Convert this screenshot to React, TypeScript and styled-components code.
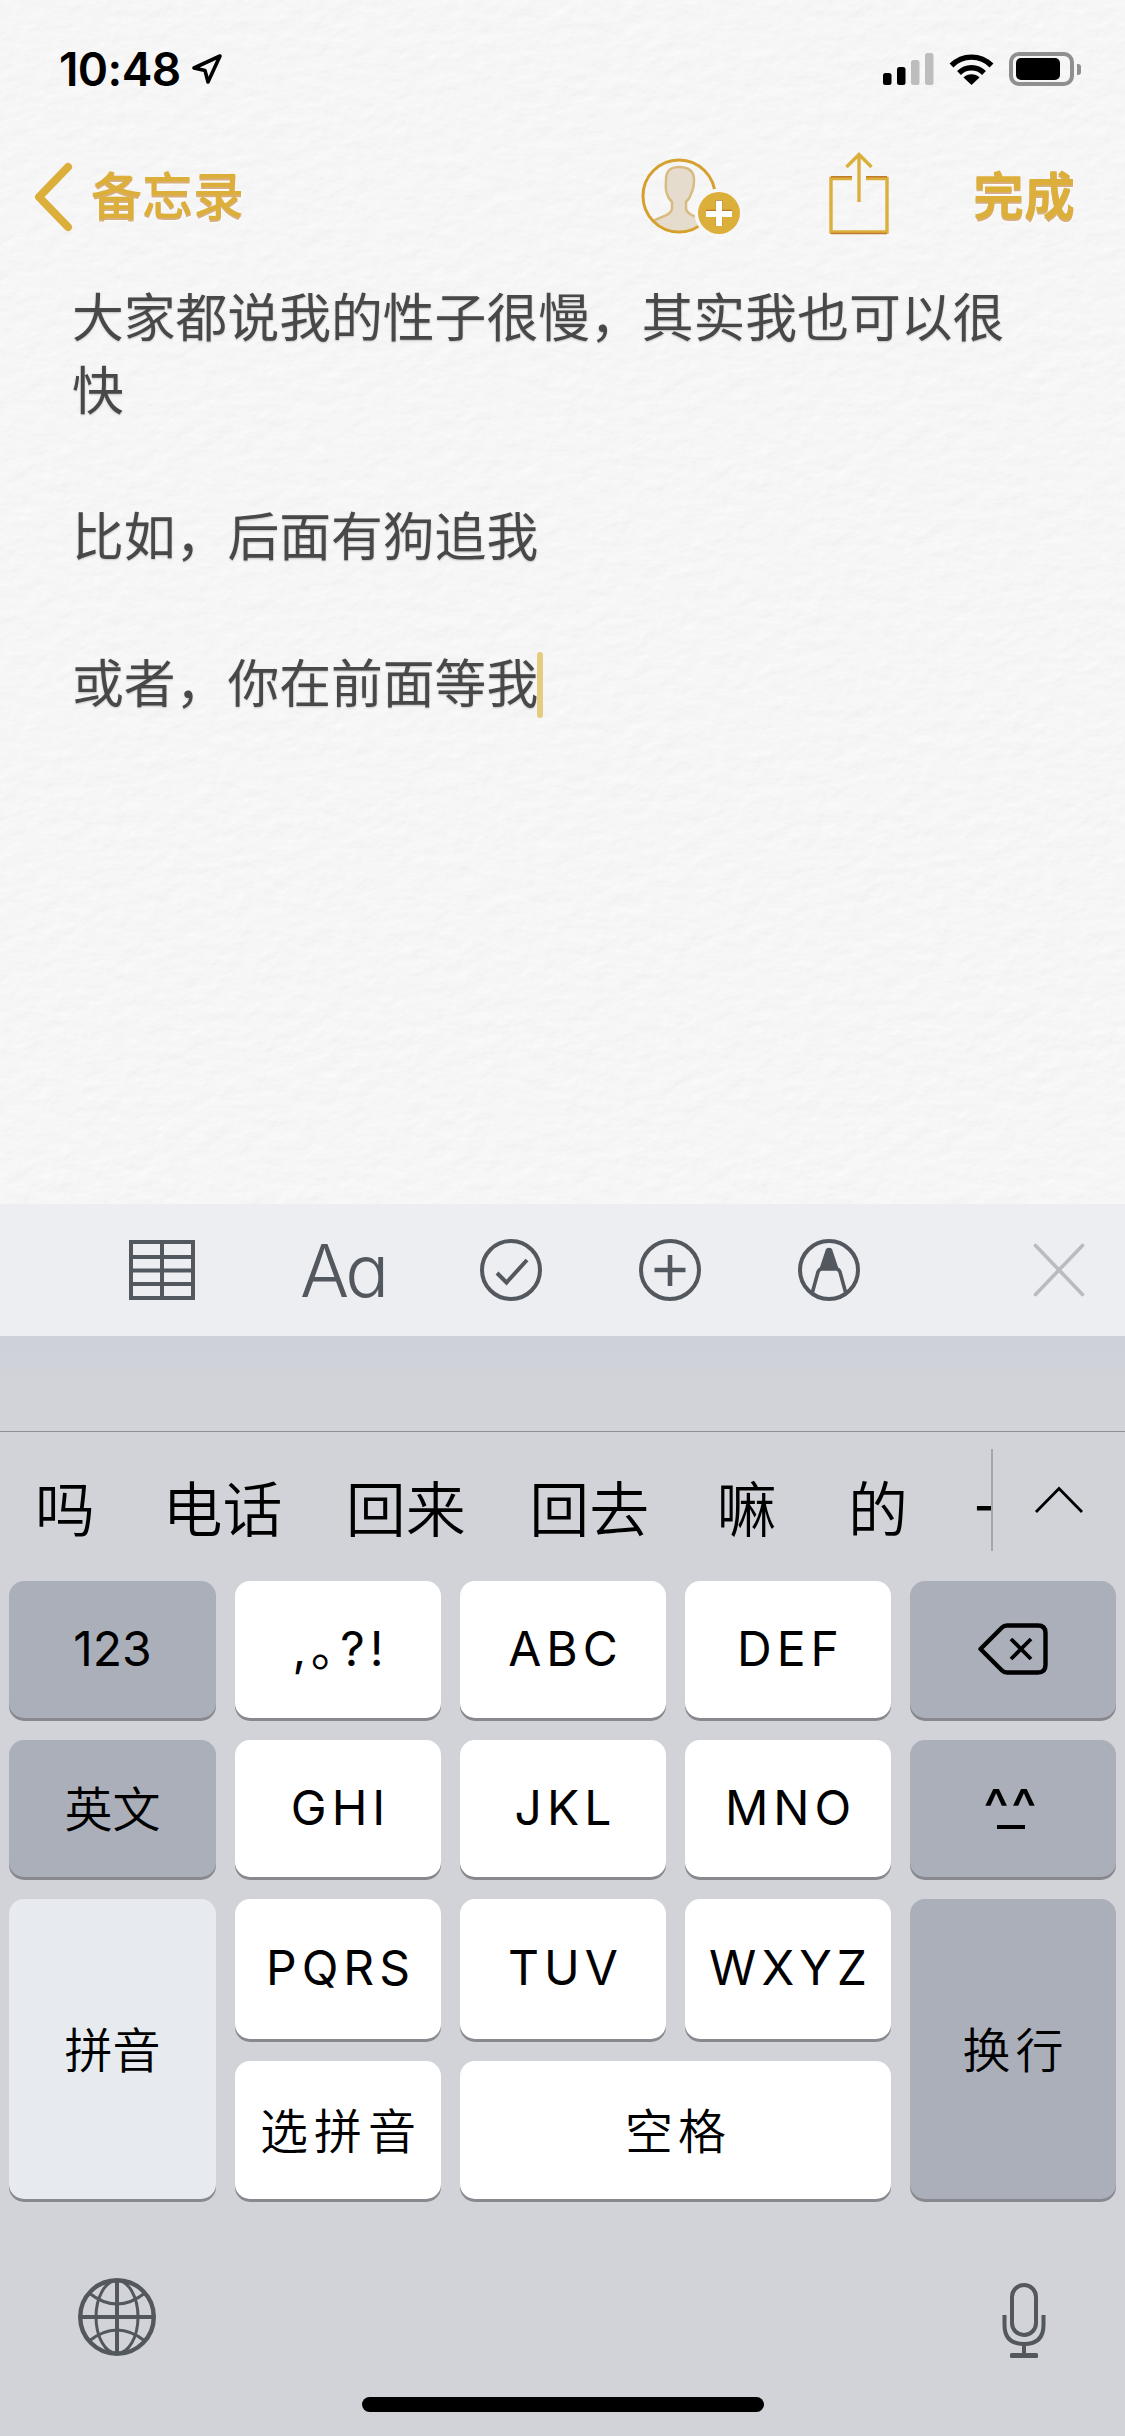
import React from "react";
import styled, { createGlobalStyle } from "styled-components";

const CJK = `"Noto Sans CJK SC", "Noto Sans", sans-serif`;
const LATIN = `Inter, "Noto Sans CJK SC", sans-serif`;
const GOLD = "#dcae3a";
const ICON = "#53575e";

const paper =
  "data:image/svg+xml," +
  encodeURIComponent(
    `<svg xmlns='http://www.w3.org/2000/svg' width='700' height='700'><filter id='p' x='0' y='0' width='100%' height='100%'><feTurbulence type='fractalNoise' baseFrequency='0.05 0.075' numOctaves='4' seed='7' stitchTiles='stitch'/><feDiffuseLighting surfaceScale='0.34' diffuseConstant='1.12' lighting-color='#f9f9f9'><feDistantLight azimuth='60' elevation='60'/></feDiffuseLighting></filter><rect width='700' height='700' filter='url(#p)'/></svg>`
  );

const Global = createGlobalStyle`
  html, body { margin: 0; padding: 0; background: #f6f6f6; }
  * { box-sizing: border-box; }
`;

const Screen = styled.div`
  width: 1125px;
  height: 2436px;
  display: flex;
  flex-direction: column;
  overflow: hidden;
  background: #f7f7f7 url("${paper}");
`;

const StatusBar = styled.div`
  height: 138px;
  flex: none;
  display: flex;
  align-items: center;
  padding: 0 43px 0 59px;
`;

const Clock = styled.span`
  font: 600 46px/1 ${LATIN};
  color: #000;
  letter-spacing: -0.6px;
`;

const LocationArrow = styled.svg`
  width: 32px;
  height: 32px;
  margin-left: 10px;
`;

const StatusIcons = styled.div`
  margin-left: auto;
  display: flex;
  align-items: center;
  gap: 15px;
`;

const Battery = styled.div`
  width: 65px;
  height: 34px;
  border: 4px solid #8f8f8f;
  border-radius: 10px;
  padding: 2px 10px 2px 3px;
  position: relative;
  &::before {
    content: "";
    display: block;
    height: 100%;
    background: #000;
    border-radius: 5px;
  }
  &::after {
    content: "";
    position: absolute;
    right: -11px;
    top: 8px;
    width: 4px;
    height: 11px;
    background: #8f8f8f;
    border-radius: 0 3px 3px 0;
  }
`;

const NavBar = styled.div`
  height: 118px;
  flex: none;
  display: flex;
  align-items: center;
  padding: 0 50px 0 33px;
`;

const BackLabel = styled.span`
  font: 500 51px/1 ${CJK};
  color: ${GOLD};
  margin: -7px 0 0 17px;
  text-shadow: 0 1.5px 0 rgba(190, 120, 40, 0.6), 0 3px 2px rgba(255, 255, 255, 0.9);
`;

const ContactIcon = styled.svg`
  margin: -3px 0 0 auto;
  width: 102px;
  height: 80px;
`;

const ShareIcon = styled.svg`
  margin: -6px 0 0 85px;
  width: 62px;
  height: 84px;
`;

const DoneLabel = styled.span`
  margin: -7px 0 0 83px;
  font: 700 51px/1 ${CJK};
  color: ${GOLD};
  text-shadow: 0 1.5px 0 rgba(190, 120, 40, 0.6), 0 3px 2px rgba(255, 255, 255, 0.9);
`;

const Note = styled.div`
  flex: 1;
  padding: 23px 106px 0 72px;
  font: 400 51.8px/72.8px ${CJK};
  color: #484848;
  text-shadow: 0 1px 2px rgba(0, 0, 0, 0.22);
`;

const Paragraph = styled.p`
  margin: 0 0 73.6px;
`;

const Caret = styled.span`
  display: inline-block;
  width: 6px;
  height: 66px;
  margin-left: -1px;
  vertical-align: middle;
  margin-top: -8px;
  border-radius: 3px;
  background: #e5cd80;
`;

const Toolbar = styled.div`
  height: 132px;
  flex: none;
  display: flex;
  align-items: center;
  padding-left: 129px;
  background: #eceef2;
`;

const ToolIcon = styled.svg<{ $after?: number }>`
  flex: none;
  margin-left: ${(p) => p.$after ?? 0}px;
`;

const FontTool = styled.span`
  width: 84px;
  margin-left: 105px;
  font: 350 73px/1 ${LATIN};
  color: ${ICON};
  white-space: nowrap;
  letter-spacing: -4px;
`;

const Keyboard = styled.div`
  flex: none;
  height: 1100px;
  background: #d1d3d8;
  display: flex;
  flex-direction: column;
`;

const SuggestionBand = styled.div`
  height: 96px;
  flex: none;
  background: linear-gradient(#ced1d9, #d1d3d8 60%);
  border-bottom: 1px solid #8e8f94;
`;

const CandidateBar = styled.div`
  height: 149px;
  flex: none;
  display: flex;
  align-items: flex-start;
`;

const CandidateList = styled.div`
  width: 991px;
  height: 149px;
  overflow: hidden;
  display: flex;
  align-items: center;
  gap: 63.4px;
  padding: 0 0 1px 31px;
  font: 350 60px/1 ${CJK};
  color: #000;
  white-space: nowrap;
  & > :last-child {
    margin-left: -5px;
  }
`;

const Candidate = styled.span<{ $single: boolean }>`
  flex: none;
  padding: 0 ${(p) => (p.$single ? 4 : 0)}px;
`;

const ExpandButton = styled.div`
  width: 134px;
  height: 102px;
  margin-top: 17px;
  border-left: 2px solid #a4a6ab;
  display: flex;
  align-items: center;
  justify-content: center;
`;

const KeyGrid = styled.div`
  display: grid;
  grid-template-columns: 207px repeat(4, 206px);
  grid-template-rows: 137px 137px 140px 138px;
  column-gap: 19px;
  row-gap: 22px;
  padding-left: 9px;
`;

const tones = { plain: "#ffffff", fn: "#abafba", active: "#e7eaef" };

const Key = styled.div<{
  $tone?: keyof typeof tones;
  $rows?: number;
  $cols?: number;
  $track?: number;
}>`
  display: flex;
  align-items: center;
  justify-content: center;
  border-radius: 15px;
  background: ${(p) => tones[p.$tone ?? "plain"]};
  box-shadow: 0 3px 0 #88898f;
  color: #000;
  font: 380 48px/1 ${LATIN};
  padding-bottom: 2px;
  grid-row: span ${(p) => p.$rows ?? 1};
  grid-column: ${(p) => (p.$track ? `${p.$track} / span ${p.$cols ?? 1}` : `span ${p.$cols ?? 1}`)};
`;

const Letters = styled.span`
  letter-spacing: 5px;
  padding-left: 5px;
`;

const Hanzi = styled.span<{ $spread?: number }>`
  font: 350 48px/1 ${CJK};
  margin-top: -3px;
  letter-spacing: ${(p) => p.$spread ?? 0}px;
  padding-left: ${(p) => p.$spread ?? 0}px;
`;

const Kaomoji = styled.span`
  position: relative;
  font: 500 54px/1 ${LATIN};
  letter-spacing: 2px;
  margin-right: 4px;
  &::after {
    content: "";
    position: absolute;
    left: 50%;
    width: 28px;
    margin-left: -14px;
    bottom: 6px;
    height: 4px;
    background: #000;
  }
`;

const Footer = styled.div`
  flex: 1;
  display: flex;
  flex-direction: column;
`;

const FooterRow = styled.div`
  display: flex;
  align-items: flex-start;
  padding: 79px 79px 0 78px;
`;

const Mic = styled.svg`
  margin: 5px 0 0 auto;
`;

const HomeBar = styled.div`
  width: 402px;
  height: 15px;
  margin: 39px 0 0 362px;
  border-radius: 8px;
  background: #000;
`;

const Ring = () => <circle cx="31" cy="31" r="29" fill="none" stroke={ICON} strokeWidth="4" />;

export default function App() {
  return (
    <Screen>
      <Global />
      <StatusBar>
        <Clock>10:48</Clock>
        <LocationArrow viewBox="0 0 32 32">
          <path d="M3 15 L29 3 L17 29 L14 17.5 Z" fill="none" stroke="#000" strokeWidth="3.6" strokeLinejoin="round" />
        </LocationArrow>
        <StatusIcons>
          <svg width="51" height="32" viewBox="0 0 51 32">
            <rect x="0" y="20" width="8.5" height="12" rx="2.5" fill="#000" />
            <rect x="14" y="14" width="8.5" height="18" rx="2.5" fill="#000" />
            <rect x="28" y="7" width="8.5" height="25" rx="2.5" fill="#bdbdbd" />
            <rect x="42" y="0" width="8.5" height="32" rx="2.5" fill="#bdbdbd" />
          </svg>
          <svg width="45" height="32" viewBox="0 0 45 32">
            <path d="M2.5 12.5 A28 28 0 0 1 42.5 12.5" fill="none" stroke="#000" strokeWidth="5.4" />
            <path d="M10 20 A17.5 17.5 0 0 1 35 20" fill="none" stroke="#000" strokeWidth="5.4" />
            <path d="M22.5 32 L14.5 24.5 A11.5 11.5 0 0 1 30.5 24.5 Z" fill="#000" />
          </svg>
          <Battery />
        </StatusIcons>
        <svg width="8" height="1" />
      </StatusBar>

      <NavBar>
        <svg width="41" height="70" viewBox="0 0 41 70">
          <path d="M35 5 L6 35 L35 65" fill="none" stroke={GOLD} strokeWidth="8" strokeLinecap="round" strokeLinejoin="round" />
        </svg>
        <BackLabel>备忘录</BackLabel>
        <ContactIcon viewBox="0 0 102 80">
          <defs>
            <clipPath id="portrait">
              <circle cx="38" cy="40" r="35" />
            </clipPath>
          </defs>
          <path
            d="M38 11 C46 11 53 14 53 24 C53 30 52 34 50 38 C49 42 47 44 45 46 L45 53 C46 58 52 60 62 63 L62 80 L10 80 L12 65 C22 60 30 59 31 53 L31 46 C29 44 27 42 26 38 C24 34 25 30 25 24 C25 14 30 11 38 11 Z"
            fill="#e6dccd"
            stroke="#d8bb80"
            strokeWidth="2.5"
            clipPath="url(#portrait)"
          />
          <circle cx="38" cy="40" r="36" fill="none" stroke="#d6a02f" strokeWidth="3" />
          <circle cx="78" cy="57" r="24.5" fill="#f7f7f7" />
          <circle cx="78" cy="57" r="21" fill={GOLD} />
          <path d="M78 44 V70 M65 57 H91" stroke="#b9772b" strokeWidth="6.5" />
          <path d="M78 44.8 V70 M65 58 H91" stroke="#fff" strokeWidth="6" />
        </ContactIcon>
        <ShareIcon viewBox="0 0 62 84">
          <path d="M24 26.5 H3 V80 H59 V26.5 H38" fill="none" stroke={GOLD} strokeWidth="3.4" />
          <path d="M3 24.8 H24 M38 24.8 H59 M3 81.5 H59" stroke="#bf7a2b" strokeWidth="1.6" />
          <path d="M31 50 V3 M18.5 15 L31 2.5 L43.5 15" fill="none" stroke={GOLD} strokeWidth="3.4" />
        </ShareIcon>
        <DoneLabel>完成</DoneLabel>
      </NavBar>

      <Note>
        <Paragraph>大家都说我的性子很慢，其实我也可以很快</Paragraph>
        <Paragraph>比如，后面有狗追我</Paragraph>
        <Paragraph>
          或者，你在前面等我
          <Caret />
        </Paragraph>
      </Note>

      <Toolbar>
        <svg width="66" height="60" viewBox="0 0 66 60">
          <path
            d="M2 2 H64 V58 H2 Z M33 2 V58 M2 17 H64 M2 30.5 H64 M2 44 H64"
            fill="none"
            stroke={ICON}
            strokeWidth="4"
          />
        </svg>
        <FontTool>Aɑ</FontTool>
        <ToolIcon $after={96} width="62" height="62" viewBox="0 0 62 62">
          <Ring />
          <path d="M17 34 L26.5 43.5 L47 21" fill="none" stroke={ICON} strokeWidth="4" />
        </ToolIcon>
        <ToolIcon $after={97} width="62" height="62" viewBox="0 0 62 62">
          <Ring />
          <path d="M31 16 V47 M15.5 31 H46.5" stroke={ICON} strokeWidth="4.6" />
        </ToolIcon>
        <ToolIcon $after={97} width="62" height="62" viewBox="0 0 62 62">
          <Ring />
          <path d="M28 10 Q31 7.5 34 10 L41 31 H21 Z" fill={ICON} />
          <path d="M14.5 53 L20 33 Q21 30 24 30 H38 Q41 30 42 33 L47.5 53" fill="none" stroke={ICON} strokeWidth="3.6" />
        </ToolIcon>
        <ToolIcon $after={173} width="52" height="54" viewBox="0 0 52 54">
          <path d="M2.5 2.5 L49.5 51.5 M49.5 2.5 L2.5 51.5" stroke="#b9bbbe" strokeWidth="3.6" strokeLinecap="round" />
        </ToolIcon>
      </Toolbar>

      <Keyboard>
        <SuggestionBand />
        <CandidateBar>
          <CandidateList>
            {["吗", "电话", "回来", "回去", "嘛", "的", "一"].map((word) => (
              <Candidate key={word} $single={word.length === 1}>
                {word}
              </Candidate>
            ))}
          </CandidateList>
          <ExpandButton>
            <svg width="50" height="28" viewBox="0 0 50 28">
              <path d="M2 26 L25 2.5 L48 26" fill="none" stroke="#000" strokeWidth="2.8" />
            </svg>
          </ExpandButton>
        </CandidateBar>

        <KeyGrid>
          <Key $tone="fn">123</Key>
          <Key><Letters>,｡?!</Letters></Key>
          <Key><Letters>ABC</Letters></Key>
          <Key><Letters>DEF</Letters></Key>
          <Key $tone="fn">
            <svg width="70" height="52" viewBox="0 0 70 52">
              <path
                d="M2.5 26 L24 4.5 Q26 2.5 29 2.5 H60 Q67.5 2.5 67.5 10 V42 Q67.5 49.5 60 49.5 H29 Q26 49.5 24 47.5 Z"
                fill="none"
                stroke="#000"
                strokeWidth="4.4"
                strokeLinejoin="round"
              />
              <path d="M33 16 L53 36 M53 16 L33 36" stroke="#000" strokeWidth="3.8" />
            </svg>
          </Key>

          <Key $tone="fn">
            <Hanzi>英文</Hanzi>
          </Key>
          <Key><Letters>GHI</Letters></Key>
          <Key><Letters>JKL</Letters></Key>
          <Key><Letters>MNO</Letters></Key>
          <Key $tone="fn">
            <Kaomoji>^^</Kaomoji>
          </Key>

          <Key $tone="active" $rows={2}>
            <Hanzi>拼音</Hanzi>
          </Key>
          <Key><Letters>PQRS</Letters></Key>
          <Key><Letters>TUV</Letters></Key>
          <Key><Letters>WXYZ</Letters></Key>
          <Key $tone="fn" $rows={2}>
            <Hanzi $spread={5}>换行</Hanzi>
          </Key>

          <Key $track={2}>
            <Hanzi $spread={6}>选拼音</Hanzi>
          </Key>
          <Key $track={3} $cols={2}>
            <Hanzi $spread={5}>空格</Hanzi>
          </Key>
        </KeyGrid>

        <Footer>
          <FooterRow>
            <svg width="78" height="78" viewBox="0 0 78 78">
              <g fill="none" stroke={ICON}>
                <circle cx="39" cy="39" r="36.8" strokeWidth="4.4" />
                <path d="M39 2 V76 M2 39 H76" strokeWidth="4" />
                <ellipse cx="39" cy="39" rx="21" ry="36.5" strokeWidth="3" />
                <path d="M11 15 Q39 37 67 15 M11 63 Q39 41 67 63" strokeWidth="3" />
              </g>
            </svg>
            <Mic width="44" height="75" viewBox="0 0 44 75">
              <g fill="none" stroke={ICON}>
                <rect x="10" y="2" width="24" height="50" rx="12" strokeWidth="4" />
                <path d="M2.5 32 V42 Q2.5 61 22 61 Q41.5 61 41.5 42 V32" strokeWidth="4" />
                <path d="M22 61 V71" strokeWidth="4" />
              </g>
              <rect x="8" y="70" width="28" height="5" rx="1.5" fill={ICON} />
            </Mic>
          </FooterRow>
          <HomeBar />
        </Footer>
      </Keyboard>
    </Screen>
  );
}
